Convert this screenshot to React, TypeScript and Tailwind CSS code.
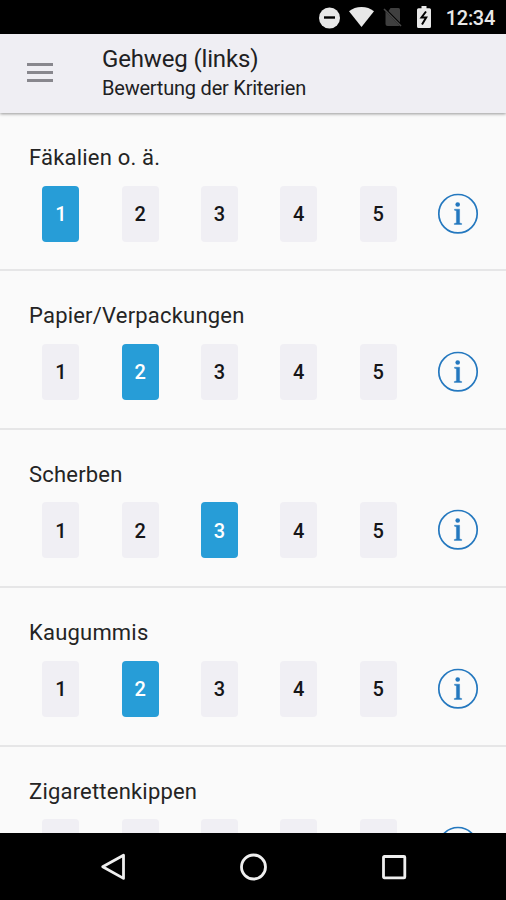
import { useState } from 'react';
import clsx from 'clsx';

interface Criterion {
  title: string;
  rating: number | null;
}

interface CriterionRowProps {
  criterion: Criterion;
  onRate: (rating: number) => void;
}

const RATINGS = [1, 2, 3, 4, 5];

const INITIAL_CRITERIA: Criterion[] = [
  { title: 'Fäkalien o. ä.', rating: 1 },
  { title: 'Papier/Verpackungen', rating: 2 },
  { title: 'Scherben', rating: 3 },
  { title: 'Kaugummis', rating: 2 },
  { title: 'Zigarettenkippen', rating: null },
];

function StatusBar() {
  return (
    <div className="flex h-[34px] shrink-0 items-center justify-end bg-black pr-[11px] text-[#e8e8e8]">
      {/* Do not disturb */}
      <svg className="mt-px mr-[8px] h-[22px] w-[22px]" viewBox="0 0 22 22">
        <circle cx="10.5" cy="11" r="10.5" fill="currentColor" />
        <rect x="5" y="9.3" width="11" height="2.4" fill="#000" />
      </svg>
      {/* Wifi */}
      <svg className="mr-[9px] h-[20px] w-[25px]" viewBox="0 0 25 20">
        <path d="M0 4.2C3.5 1.5 7.7 0 12.5 0S21.5 1.5 25 4.2L12.5 20Z" fill="currentColor" />
      </svg>
      {/* No SIM */}
      <svg className="mr-[15px] h-[20px] w-[19px]" viewBox="0 0 19 20">
        <path d="M7.5 1H15.5Q17 1 17 2.5V15.5L5.5 4Z" fill="#3f3f3f" />
        <path d="M2.5 4.5V17Q2.5 19 4.5 19H15.5L16.5 18.5Z" fill="#3f3f3f" />
        <path d="M1 2L18 19" stroke="#484848" strokeWidth="1.6" />
      </svg>
      {/* Battery, charging */}
      <svg className="mr-[15px] h-[22px] w-[14px]" viewBox="0 0 14 22">
        <path d="M4.5 0H9.5V2.2H12.5Q14 2.2 14 3.7V20.5Q14 22 12.5 22H1.5Q0 22 0 20.5V3.7Q0 2.2 1.5 2.2H4.5Z" fill="currentColor" />
        <path d="M9 5.5L4.5 11.5H9.2L5 18.5" fill="none" stroke="#000" strokeWidth="2" />
      </svg>
      <span className="pt-px text-[20px] leading-none font-medium tracking-[-0.3px]">12:34</span>
    </div>
  );
}

function Header() {
  return (
    <header className="z-10 flex h-[79px] shrink-0 items-center bg-[#efeef3] pl-[27px] shadow-[0_1px_3px_rgba(0,0,0,0.4)]">
      <button aria-label="Menü" className="mb-[2px] flex w-[26px] flex-col gap-[5px]">
        <span className="h-[3px] bg-[#88878d]" />
        <span className="h-[3px] bg-[#88878d]" />
        <span className="h-[3px] bg-[#88878d]" />
      </button>
      <div className="mb-[2px] ml-[49px] text-[#202022]">
        <h1 className="text-[24px] leading-[30px] tracking-[-0.15px]">Gehweg (links)</h1>
        <p className="text-[20px] leading-[28px] tracking-[-0.22px]">Bewertung der Kriterien</p>
      </div>
    </header>
  );
}

function InfoIcon() {
  return (
    <svg className="h-[42px] w-[42px]" viewBox="0 0 42 42">
      <circle cx="21" cy="20.7" r="19.2" fill="none" stroke="#2478bf" strokeWidth="1.7" />
      <circle cx="20.7" cy="11.5" r="2.3" fill="#2478bf" />
      <path d="M17.5 16.2H22.6V29.9L24.7 30.5V31.5H17.3V30.5L19.4 29.9V17.7L17.5 17.2Z" fill="#2478bf" stroke="#2478bf" strokeWidth="0.4" />
    </svg>
  );
}

function CriterionRow({ criterion, onRate }: CriterionRowProps) {
  return (
    <section className="h-[158.4px] shrink-0 border-b-2 border-[#e6e6e7] pt-[31px]">
      <h2 className="pl-[29px] text-[22px] leading-[28px] tracking-[0.2px] text-[#242424]">{criterion.title}</h2>
      <div className="mt-[13.5px] flex items-center justify-between pr-[27px] pl-[42.4px]">
        <div className="flex gap-[42.3px]">
          {RATINGS.map((value) => (
            <button
              key={value}
              onClick={() => onRate(value)}
              className={clsx(
                'h-[56px] w-[37px] rounded-[4px] pt-px text-[20px] leading-none font-medium',
                criterion.rating === value ? 'bg-[#279dd7] text-white' : 'bg-[#f0eff4] text-[#161618]'
              )}
            >
              {value}
            </button>
          ))}
        </div>
        <button aria-label="Info">
          <InfoIcon />
        </button>
      </div>
    </section>
  );
}

function NavigationBar() {
  return (
    <nav className="z-10 flex h-[67px] shrink-0 items-center justify-between bg-black px-[98px] text-[#efefef]">
      <svg className="h-[30px] w-[30px]" viewBox="0 0 30 30" fill="none" stroke="currentColor" strokeWidth="2.8" strokeLinejoin="round">
        <path d="M25.5 3.2V26.4L4.7 14.8Z" />
      </svg>
      <svg className="h-[30px] w-[30px]" viewBox="0 0 30 30" fill="none" stroke="currentColor" strokeWidth="2.8">
        <circle cx="15.5" cy="15" r="12" />
      </svg>
      <svg className="h-[30px] w-[30px]" viewBox="0 0 30 30" fill="none" stroke="currentColor" strokeWidth="2.8">
        <rect x="5.5" y="4.5" width="21.3" height="21.3" rx="0.8" />
      </svg>
    </nav>
  );
}

export default function App() {
  const [criteria, setCriteria] = useState(INITIAL_CRITERIA);

  const rate = (index: number, rating: number) => {
    setCriteria((prev) => prev.map((c, i) => (i === index ? { ...c, rating } : c)));
  };

  return (
    <div className="flex h-screen w-full flex-col overflow-hidden bg-[#fafafa] font-['Roboto',sans-serif]">
      <StatusBar />
      <Header />
      <main className="flex min-h-0 flex-1 flex-col overflow-hidden">
        {criteria.map((criterion, index) => (
          <CriterionRow key={criterion.title} criterion={criterion} onRate={(r) => rate(index, r)} />
        ))}
      </main>
      <NavigationBar />
    </div>
  );
}
